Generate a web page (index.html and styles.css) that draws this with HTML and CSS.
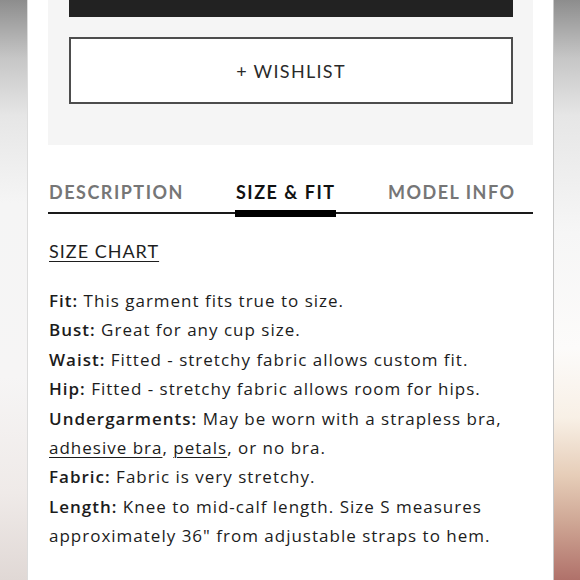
FILE: index.html
```html
<!DOCTYPE html>
<html lang="en">
<head>
<meta charset="utf-8">
<title>Size &amp; Fit</title>
<link rel="stylesheet" href="styles.css">
</head>
<body>
<div class="frame">
  <div class="edge edge-left"></div>
  <main class="page">
    <section class="buy-panel">
      <div class="add-bar"></div>
      <button class="wishlist" type="button">+ WISHLIST</button>
    </section>
    <nav class="tabs">
      <span class="tab">DESCRIPTION</span>
      <span class="tab tab-active">SIZE &amp; FIT</span>
      <span class="tab">MODEL INFO</span>
    </nav>
    <a class="size-chart" href="#">SIZE CHART</a>
    <div class="details">
      <p><b>Fit:</b> This garment fits true to size.</p>
      <p><b>Bust:</b> Great for any cup size.</p>
      <p><b>Waist:</b> Fitted - stretchy fabric allows custom fit.</p>
      <p><b>Hip:</b> Fitted - stretchy fabric allows room for hips.</p>
      <p><b>Undergarments:</b> May be worn with a strapless bra, <a href="#">adhesive bra</a>, <a href="#">petals</a>, or no bra.</p>
      <p><b>Fabric:</b> Fabric is very stretchy.</p>
      <p><b>Length:</b> Knee to mid-calf length. Size S measures approximately 36" from adjustable straps to hem.</p>
    </div>
  </main>
  <div class="edge edge-right"></div>
</div>
</body>
</html>
```

FILE: styles.css
```css
html, body {
  margin: 0;
  padding: 0;
  height: 100%;
}
body {
  font-family: "Lato", "Open Sans", sans-serif;
  color: #1e1e1e;
  background: #fff;
  overflow: hidden;
}
.frame {
  display: flex;
  height: 580px;
}
.edge {
  flex: none;
  height: 100%;
}
.edge-left {
  width: 28px;
  background: linear-gradient(to bottom, #8d8d8d 0%, #c6c6c6 10%, #e6e6e6 20%, #f5f5f5 35%, #f6f5f5 65%, #efeae8 85%, #e0d8d5 100%);
  border-right: 1px solid #dcdcdc;
  box-sizing: border-box;
}
.edge-right {
  width: 27px;
  background: linear-gradient(to bottom, #8d8d8d 0%, #c6c6c6 10%, #e6e6e6 20%, #f6f6f6 40%, #fcfbfa 60%, #f8f0e6 72%, #e6cdb8 82%, #cfa795 90%, #b0716a 100%);
  border-left: 1px solid #c8c8c8;
  box-sizing: border-box;
}
.page {
  flex: 1;
  padding: 0 20px;
  background: #fff;
  display: flex;
  flex-direction: column;
}
.buy-panel {
  background: #f5f5f5;
  padding: 0 20px 41px 21px;
  display: flex;
  flex-direction: column;
  gap: 20px;
}
.add-bar {
  height: 17px;
  background: #222;
}
.wishlist {
  height: 67px;
  box-sizing: border-box;
  border: 2px solid #4d4d4d;
  background: #fff;
  font-family: inherit;
  font-size: 18px;
  letter-spacing: 1.3px;
  color: #2a2a2a;
  padding: 0;
}
.tabs {
  margin-top: 35px;
  display: grid;
  grid-template-columns: 187px 152px 1fr;
  border-bottom: 2px solid #1a1a1a;
  align-items: start;
}
.tab {
  justify-self: start;
  font-size: 18px;
  font-weight: 700;
  letter-spacing: 1.5px;
  line-height: 24px;
  color: #767676;
  padding: 0 0 8px 1px;
}
.tab-active {
  color: #111;
  padding-bottom: 6px;
  border-bottom: 7px solid #000;
  margin-bottom: -5px;
}
.size-chart {
  margin-top: 25px;
  align-self: flex-start;
  font-size: 18px;
  line-height: 24px;
  letter-spacing: 1px;
  color: #1e1e1e;
  text-decoration: underline;
  text-underline-offset: 3px;
  text-decoration-thickness: 1px;
  padding-left: 1px;
}
.details {
  margin-top: 23px;
  font-family: "Open Sans", "Lato", sans-serif;
  font-size: 17px;
  line-height: 29.4px;
  letter-spacing: 1px;
  padding-left: 1px;
  color: #1c1c1c;
}
.details p {
  margin: 0;
}
.details b {
  font-weight: 600;
}
.details a {
  color: inherit;
  text-decoration: underline;
  text-underline-offset: 3px;
  text-decoration-thickness: 1px;
}
```
